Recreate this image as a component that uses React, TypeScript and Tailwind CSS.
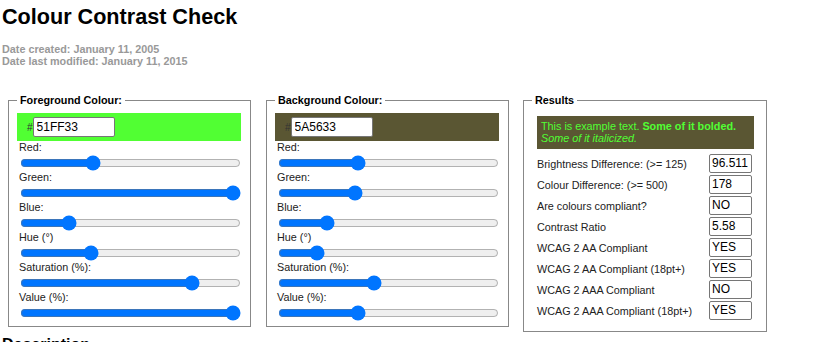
import React from 'react';

type Slider = { label: string; value: number; max: number };

const ColourPanel: React.FC<{ title: string; hex: string; bg: string; sliders: Slider[] }> = ({ title, hex, bg, sliders }) => (
  <fieldset className="w-[243px] min-w-0 border border-[#888] pl-[8px] pr-[9px] pt-[7px] pb-[5px]">
    <legend className="px-[3px] text-[10.8px] font-bold leading-[12.4px]">{title}</legend>
    <div className={`h-[28px] flex items-center pl-[10px] ${bg}`}>
      <span className="text-[10px] text-[#333]">#</span>
      <input
        type="text"
        defaultValue={hex}
        className="w-[82px] h-[20px] border border-[#767676] rounded-[2px] bg-white pl-[3px] pr-[2px] text-[12px] text-black outline-none"
      />
    </div>
    {sliders.map((s) => (
      <div key={s.label}>
        <div className="h-[13px] leading-[13px] text-[10.8px] pl-[2px] text-[#222]">{s.label}</div>
        <div className="h-[17px] flex items-center">
          <input type="range" min={0} max={s.max} defaultValue={s.value} className="w-[222px] ml-[3px] m-0" />
        </div>
      </div>
    ))}
  </fieldset>
);

const results = [
  ['Brightness Difference: (>= 125)', '96.511'],
  ['Colour Difference: (>= 500)', '178'],
  ['Are colours compliant?', 'NO'],
  ['Contrast Ratio', '5.58'],
  ['WCAG 2 AA Compliant', 'YES'],
  ['WCAG 2 AA Compliant (18pt+)', 'YES'],
  ['WCAG 2 AAA Compliant', 'NO'],
  ['WCAG 2 AAA Compliant (18pt+)', 'YES'],
];

const App: React.FC = () => {
  return (
    <div className="w-[814px] h-[342px] overflow-hidden bg-white text-black font-['Liberation_Sans',Arial,sans-serif]">
      <h1 className="pl-[2px] pt-[4px] text-[21.6px] font-bold leading-[26px]">Colour Contrast Check</h1>
      <p className="mt-[13px] pl-[2px] text-[10.8px] font-bold leading-[12px] text-[#999]">
        Date created: January 11, 2005
        <br />
        Date last modified: January 11, 2015
      </p>

      <div className="flex items-start gap-[15px] ml-[8px] mt-[27px]">
        <ColourPanel
          title="Foreground Colour:"
          hex="51FF33"
          bg="bg-[#51FF33]"
          sliders={[
            { label: 'Red:', value: 81, max: 255 },
            { label: 'Green:', value: 255, max: 255 },
            { label: 'Blue:', value: 51, max: 255 },
            { label: 'Hue (°)', value: 111, max: 360 },
            { label: 'Saturation (%):', value: 80, max: 100 },
            { label: 'Value (%):', value: 100, max: 100 },
          ]}
        />
        <ColourPanel
          title="Background Colour:"
          hex="5A5633"
          bg="bg-[#5A5633]"
          sliders={[
            { label: 'Red:', value: 90, max: 255 },
            { label: 'Green:', value: 86, max: 255 },
            { label: 'Blue:', value: 51, max: 255 },
            { label: 'Hue (°)', value: 54, max: 360 },
            { label: 'Saturation (%):', value: 43, max: 100 },
            { label: 'Value (%):', value: 35, max: 100 },
          ]}
        />

        {/* Results */}
        <fieldset className="w-[244px] -ml-px min-w-0 border border-[#888] pl-[8px] pr-[12px] pt-[10px] pb-[11px]">
          <legend className="px-[3px] text-[10.8px] font-bold leading-[12.4px]">Results</legend>
          <div className="pl-[5px]">
            <div className="bg-[#5A5633] text-[#51FF33] text-[10.8px] leading-[12px] pl-[4px] pt-[4px] pb-[5px]">
              This is example text. <strong>Some of it bolded.</strong>
              <br />
              <em>Some of it italicized.</em>
            </div>
            <div className="mt-[5px] flex flex-col gap-[2px] pr-[2px]">
              {results.map(([label, value]) => (
                <div key={label} className="h-[19px] flex items-center justify-between text-[10.8px] text-[#222]">
                  <span>{label}</span>
                  <span className="w-[43px] h-[19px] border border-[#767676] rounded-[2px] pl-[2px] text-[12px] leading-[17px] text-black">
                    {value}
                  </span>
                </div>
              ))}
            </div>
          </div>
        </fieldset>
      </div>

      <h2 className="mt-[3px] pl-[2px] text-[16px] font-bold leading-[20px]">Description</h2>
    </div>
  );
};

export default App;
